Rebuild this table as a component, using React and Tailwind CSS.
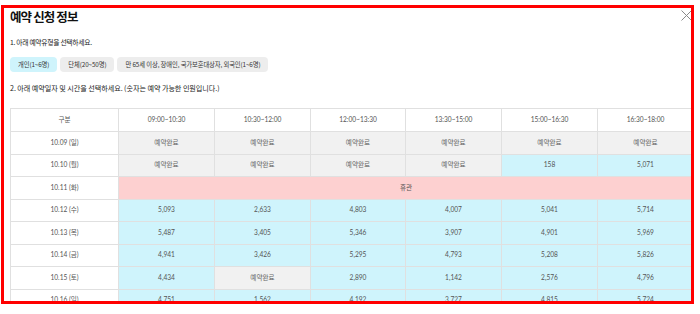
import React from "react";

const headers = ["구분", "09:00~10:30", "10:30~12:00", "12:00~13:30", "13:30~15:00", "15:00~16:30", "16:30~18:00"];
const D = "예약완료";
const rows = [
  ["10.09 (일)", [D, D, D, D, D, D]],
  ["10.10 (월)", [D, D, D, D, "158", "5,071"]],
  ["10.11 (화)", null],
  ["10.12 (수)", ["5,093", "2,633", "4,803", "4,007", "5,041", "5,714"]],
  ["10.13 (목)", ["5,487", "3,405", "5,346", "3,907", "4,901", "5,969"]],
  ["10.14 (금)", ["4,941", "3,426", "5,295", "4,793", "5,208", "5,826"]],
  ["10.15 (토)", ["4,434", D, "2,890", "1,142", "2,576", "4,796"]],
  ["10.16 (일)", ["4,751", "1,562", "4,192", "3,727", "4,815", "5,724"]],
];
const widths = [108, 96, 96, 95, 96, 96, 96];

export default function App() {
  return (
    <div className="w-[700px] h-[314px] bg-white overflow-hidden" style={{ fontFamily: "'Noto Sans CJK KR', 'Noto Sans', sans-serif" }}>
      <div className="relative ml-[1px] mt-[5px] w-[693px] h-[299px] border-[3px] border-[#ff0000] overflow-hidden pl-[6px] flex flex-col">
        <svg className="absolute left-[677px] top-[2px]" width="11" height="11" viewBox="0 0 11 11">
          <path d="M0.5 0.5 L10.5 10.5 M10.5 0.5 L0.5 10.5" stroke="#8a8a8a" strokeWidth="1" fill="none" />
        </svg>
        <h1 className="mt-[1px] h-[16px] leading-[16px] text-[12.5px] font-bold text-[#111] tracking-[-0.9px]">예약 신청 정보</h1>
        <p className="mt-[12px] h-[10px] leading-[10px] text-[6.8px] text-[#222] tracking-[-0.3px]">1. 아래 예약유형을 선택하세요.</p>
        <div className="mt-[10px] flex gap-[3px] h-[15px]">
          <span className="h-[15px] leading-[15px] px-[8px] rounded-[4px] bg-[#cff4fc] text-[6.3px] text-[#333] tracking-[-0.1px]">개인(1~6명)</span>
          <span className="h-[15px] leading-[15px] px-[8px] rounded-[4px] bg-[#ededed] text-[6.3px] text-[#333] tracking-[-0.1px]">단체(20~50명)</span>
          <span className="h-[15px] leading-[15px] px-[8px] rounded-[4px] bg-[#ededed] text-[6.3px] text-[#333] tracking-[-0.1px]">만 65세 이상, 장애인, 국가보훈대상자, 외국인(1~6명)</span>
        </div>
        <p className="mt-[11px] h-[10px] leading-[10px] text-[7.1px] text-[#222] tracking-[-0.05px]">2. 아래 예약일자 및 시간을 선택하세요. (숫자는 예약 가능한 인원입니다.)</p>
        <div className="mt-[15px] w-[683px] shrink-0">
          <table className="table-fixed border-collapse w-[683px] text-[6.6px] text-[#555]" style={{ fontFamily: "Lato, 'Noto Sans CJK KR', sans-serif" }}>
            <colgroup>
              {widths.map((w, i) => (
                <col key={i} style={{ width: w }} />
              ))}
            </colgroup>
            <thead>
              <tr className="h-[23px]">
                {headers.map((h) => (
                  <th key={h} className="border border-[#e0e0e0] font-normal text-center bg-white p-0">{h}</th>
                ))}
              </tr>
            </thead>
            <tbody>
              {rows.map(([label, cells]) => (
                <tr key={label} className="h-[22.5px]">
                  <td className="border border-[#e0e0e0] text-center bg-white p-0">{label}</td>
                  {cells === null ? (
                    <td colSpan={6} className="border border-[#e0e0e0] text-center bg-[#fdd0d0] p-0">휴관</td>
                  ) : (
                    cells.map((c, i) =>
                      c === D ? (
                        <td key={i} className="border border-[#e0e0e0] text-center bg-[#f1f1f1] p-0 text-[#666]">{c}</td>
                      ) : (
                        <td key={i} className="border border-[#e0e0e0] text-center bg-[#cff4fc] p-0">{c}</td>
                      )
                    )
                  )}
                </tr>
              ))}
            </tbody>
          </table>
        </div>
      </div>
    </div>
  );
}
